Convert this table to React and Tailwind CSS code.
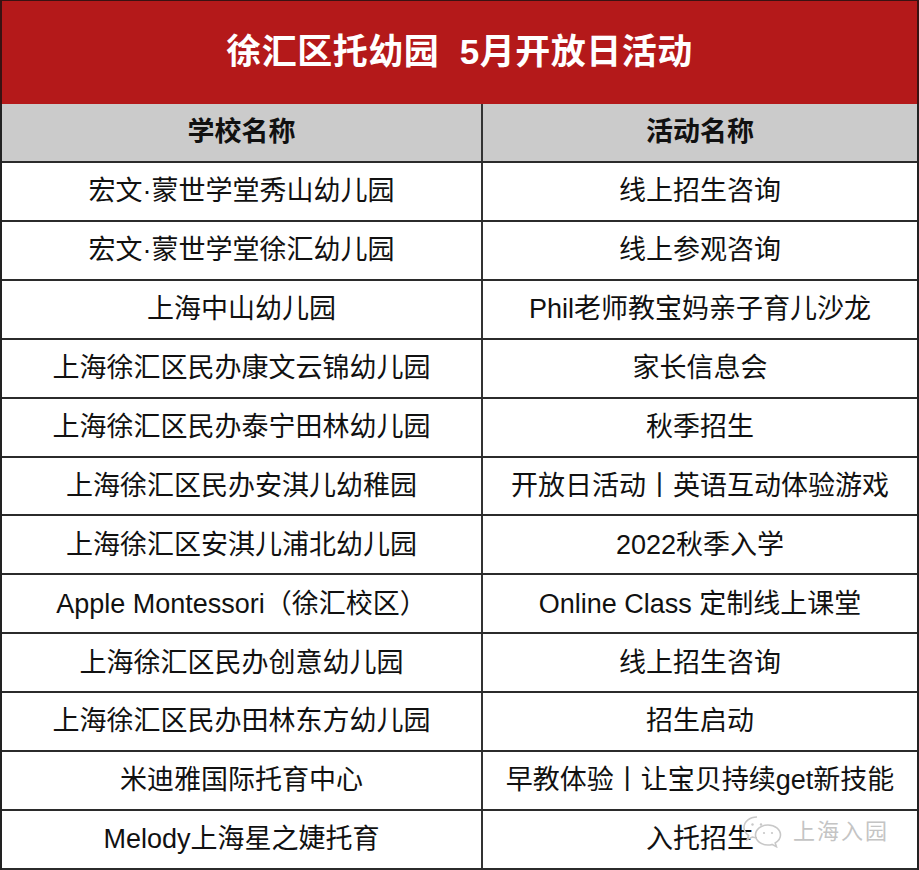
const rows = [
  ["宏文·蒙世学堂秀山幼儿园", "线上招生咨询"],
  ["宏文·蒙世学堂徐汇幼儿园", "线上参观咨询"],
  ["上海中山幼儿园", "Phil老师教宝妈亲子育儿沙龙"],
  ["上海徐汇区民办康文云锦幼儿园", "家长信息会"],
  ["上海徐汇区民办泰宁田林幼儿园", "秋季招生"],
  ["上海徐汇区民办安淇儿幼稚园", "开放日活动丨英语互动体验游戏"],
  ["上海徐汇区安淇儿浦北幼儿园", "2022秋季入学"],
  ["Apple Montessori（徐汇校区）", "Online Class 定制线上课堂"],
  ["上海徐汇区民办创意幼儿园", "线上招生咨询"],
  ["上海徐汇区民办田林东方幼儿园", "招生启动"],
  ["米迪雅国际托育中心", "早教体验丨让宝贝持续get新技能"],
  ["Melody上海星之婕托育", "入托招生"],
];

const font = { fontFamily: '"Liberation Sans", "Noto Sans CJK SC", sans-serif' };

const WeChatMark = () => (
  <div className="absolute right-[28px] bottom-[22px] flex items-center gap-[8px] text-[#c4c4c4]">
    <svg width="44" height="34" viewBox="0 0 44 34" fill="none" stroke="#c8c8c8" strokeWidth="1.6">
      <path d="M16 3C8.5 3 3 7.8 3 13.5c0 3.3 1.8 6.1 4.6 8l-1.4 4.2 5-2.6c1.5.4 3 .6 4.8.6" />
      <path d="M27 11c-7 0-12.5 4.5-12.5 10s5.5 10 12.5 10c1.4 0 2.8-.2 4-.6l4.4 2.3-1.2-3.8c3-1.8 5.3-4.7 5.3-7.9C39.5 15.5 34 11 27 11z" />
      <circle cx="11.5" cy="10.5" r="1.2" fill="#c8c8c8" stroke="none" />
      <circle cx="20" cy="10.5" r="1.2" fill="#c8c8c8" stroke="none" />
      <circle cx="23" cy="19" r="1.1" fill="#c8c8c8" stroke="none" />
      <circle cx="31" cy="19" r="1.1" fill="#c8c8c8" stroke="none" />
    </svg>
    <span className="text-[22px] tracking-[2px]" style={font}>上海入园</span>
  </div>
);

export default function App() {
  return (
    <div className="w-[919px] h-[870px] bg-white flex flex-col text-[#111]" style={font}>
      <div className="h-[104px] shrink-0 bg-[#b4191a] border-t border-l-2 border-r-2 border-[#3a1212] flex items-center justify-center">
        <h1 className="text-white font-bold text-[35px] whitespace-pre tracking-[0.5px]">
          徐汇区托幼园  5月开放日活动
        </h1>
      </div>
      <div className="flex-1 flex flex-col border-l-2 border-r-2 border-[#222] relative">
        <div className="flex-1 flex bg-[#cbcbcb] border-b-2 border-[#2b2b2b] font-bold text-[27px]">
          <div className="w-[481px] shrink-0 border-r-2 border-[#333] flex items-center justify-center">学校名称</div>
          <div className="flex-1 flex items-center justify-center">活动名称</div>
        </div>
        {rows.map(([school, event], i) => (
          <div key={i} className="flex-1 flex border-b-2 border-[#2b2b2b] text-[27px]">
            <div className="w-[481px] shrink-0 border-r-2 border-[#333] flex items-center justify-center whitespace-nowrap">
              {school}
            </div>
            <div className="flex-1 flex items-center justify-center whitespace-nowrap">{event}</div>
          </div>
        ))}
        <WeChatMark />
      </div>
    </div>
  );
}
